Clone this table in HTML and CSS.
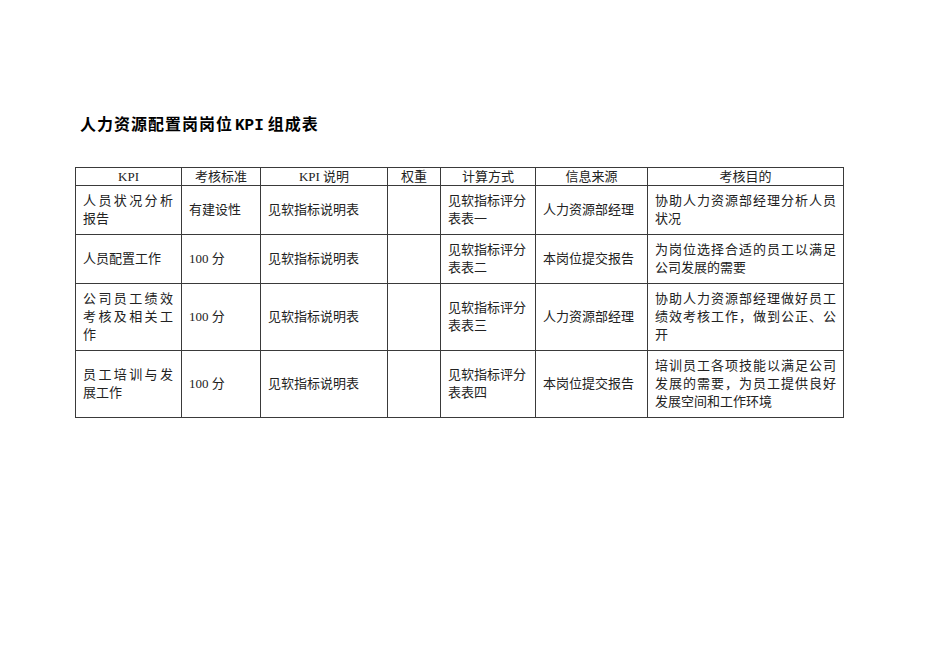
FILE: index.html
```html
<!DOCTYPE html>
<html lang="zh-CN">
<head>
<meta charset="utf-8">
<title>人力资源配置岗岗位KPI组成表</title>
<link rel="stylesheet" href="styles.css">
</head>
<body>
<div class="page">
  <h1 class="title">人力资源配置岗岗位<span class="mono">KPI</span>组成表</h1>
  <table class="kpi">
    <colgroup>
      <col class="c1"><col class="c2"><col class="c3"><col class="c4"><col class="c5"><col class="c6"><col class="c7">
    </colgroup>
    <thead>
      <tr class="head">
        <th>KPI</th><th>考核标准</th><th>KPI 说明</th><th>权重</th><th>计算方式</th><th>信息来源</th><th>考核目的</th>
      </tr>
    </thead>
    <tbody>
      <tr class="r2">
        <td class="just">人员状况分析报告</td>
        <td>有建设性</td>
        <td>见软指标说明表</td>
        <td></td>
        <td>见软指标评分表表一</td>
        <td>人力资源部经理</td>
        <td class="just">协助人力资源部经理分析人员状况</td>
      </tr>
      <tr class="r2">
        <td>人员配置工作</td>
        <td>100 分</td>
        <td>见软指标说明表</td>
        <td></td>
        <td>见软指标评分表表二</td>
        <td>本岗位提交报告</td>
        <td class="just">为岗位选择合适的员工以满足公司发展的需要</td>
      </tr>
      <tr class="r3">
        <td class="just">公司员工绩效考核及相关工作</td>
        <td>100 分</td>
        <td>见软指标说明表</td>
        <td></td>
        <td>见软指标评分表表三</td>
        <td>人力资源部经理</td>
        <td class="just">协助人力资源部经理做好员工绩效考核工作，做到公正、公开</td>
      </tr>
      <tr class="r3">
        <td class="just">员工培训与发展工作</td>
        <td>100 分</td>
        <td>见软指标说明表</td>
        <td></td>
        <td>见软指标评分表表四</td>
        <td>本岗位提交报告</td>
        <td class="just">培训员工各项技能以满足公司发展的需要，为员工提供良好发展空间和工作环境</td>
      </tr>
    </tbody>
  </table>
</div>
</body>
</html>
```
FILE: styles.css
```css
html, body {
  margin: 0;
  padding: 0;
  background: #ffffff;
}
body {
  font-family: "Liberation Serif", "Noto Sans CJK SC", serif;
  color: #111;
}
.page {
  padding: 114px 0 0 75px;
}
.title {
  margin: 0 0 0 5px;
  font-family: "Noto Sans CJK SC", sans-serif;
  font-size: 16px;
  font-weight: bold;
  line-height: 18px;
  letter-spacing: 1px;
  color: #000;
}
.title .mono {
  font-family: "Liberation Mono", "DejaVu Sans Mono", monospace;
  font-weight: bold;
  font-size: 16px;
  letter-spacing: 0;
  margin: 0 4px 0 2px;
}
.kpi {
  margin-top: 32px;
  border-collapse: collapse;
  table-layout: fixed;
  width: 768px;
  font-size: 13px;
  line-height: 18px;
  color: #222;
}
.kpi col.c1 { width: 106px; }
.kpi col.c2 { width: 79px; }
.kpi col.c3 { width: 127px; }
.kpi col.c4 { width: 53px; }
.kpi col.c5 { width: 95px; }
.kpi col.c6 { width: 112px; }
.kpi col.c7 { width: 196px; }
.kpi th, .kpi td {
  border: 1px solid #3a3a3a;
  padding: 0 8px 0 7px;
  vertical-align: middle;
  text-align: left;
  font-weight: normal;
  font-family: "Liberation Serif", "Noto Sans CJK SC", serif;
}
.kpi td:last-child {
  padding-right: 7px;
}
.kpi th {
  text-align: center;
  padding: 0;
  line-height: 16px;
}
.kpi tr.head { height: 18px; }
.kpi tr.r2 { height: 49px; }
.kpi tr.r3 { height: 67px; }
.kpi td.just {
  text-align: justify;
  text-justify: inter-character;
}
```
